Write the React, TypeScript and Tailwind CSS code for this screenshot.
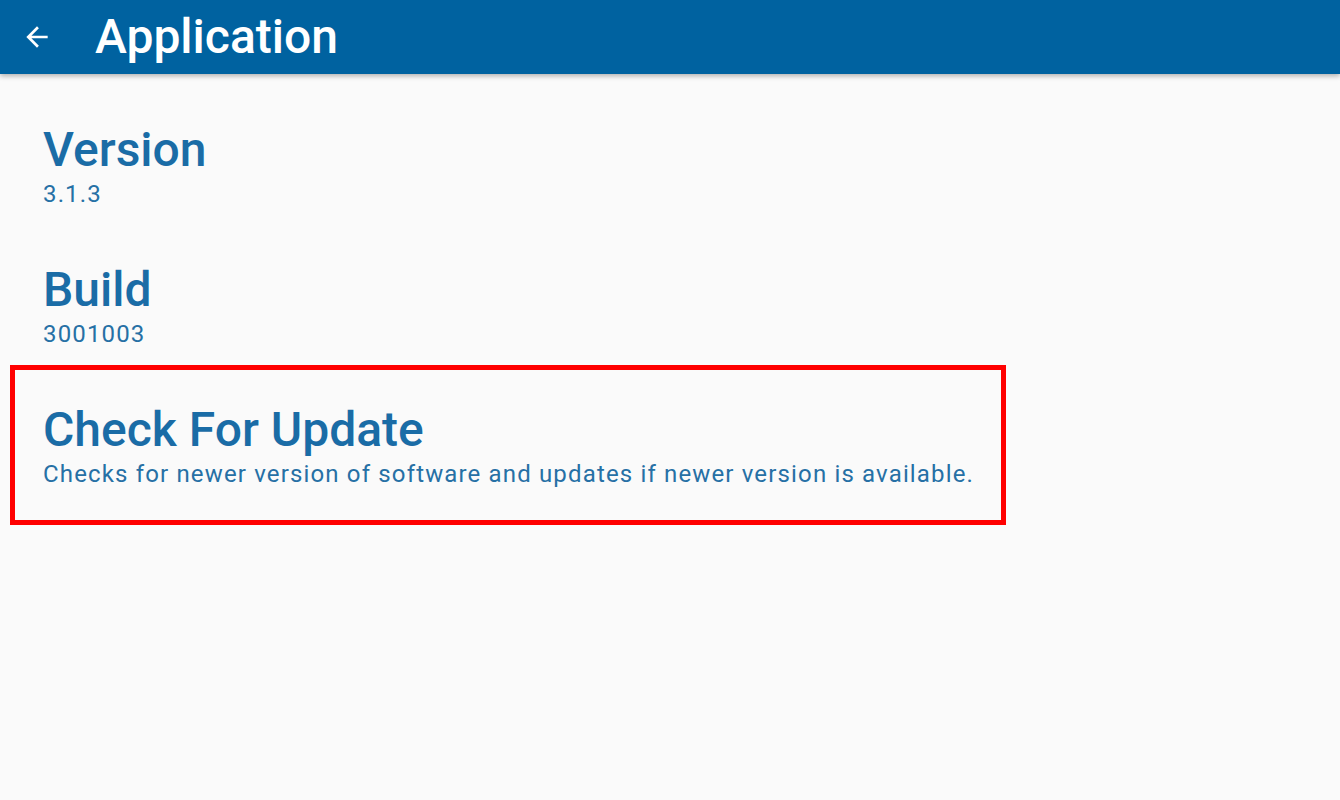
import React from "react";

const items = [
  { title: "Version", sub: "3.1.3" },
  { title: "Build", sub: "3001003" },
];

function Item({ title, sub }: { title: string; sub: string }) {
  return (
    <div className="flex flex-col">
      <div className="text-[48px] leading-[56px] font-medium text-[#1a6ca6]">{title}</div>
      <div className="mt-[2px] text-[24px] leading-[28px] tracking-[0.048em] text-[#2670a5]">{sub}</div>
    </div>
  );
}

export default function App() {
  return (
    <div
      className="w-[1340px] h-[800px] bg-[#fafafa] overflow-hidden flex flex-col"
      style={{ fontFamily: "Roboto, 'Noto Sans', sans-serif" }}
    >
      <div className="h-[74px] shrink-0 bg-[#0062a0] flex items-center shadow-[0_2px_5px_rgba(0,0,0,0.3)] relative z-10">
        <div className="w-[96px] flex items-center justify-start pl-[21px]">
          <svg width="32" height="32" viewBox="0 0 24 24" fill="#ffffff">
            <path d="M20 11H7.83l5.59-5.59L12 4l-8 8 8 8 1.41-1.41L7.83 13H20v-2z" />
          </svg>
        </div>
        <div className="text-white text-[48px] leading-[56px] font-medium -ml-px">Application</div>
      </div>
      <div className="flex flex-col pl-[43px] pt-[48px] gap-[54px]">
        {items.map((it) => (
          <Item key={it.title} {...it} />
        ))}
        <div className="relative">
          <div className="absolute left-[-33px] top-[-37px] w-[996px] h-[160px] border-[5px] border-[#ff0000] pointer-events-none" />
          <Item
            title="Check For Update"
            sub="Checks for newer version of software and updates if newer version is available."
          />
        </div>
      </div>
    </div>
  );
}
